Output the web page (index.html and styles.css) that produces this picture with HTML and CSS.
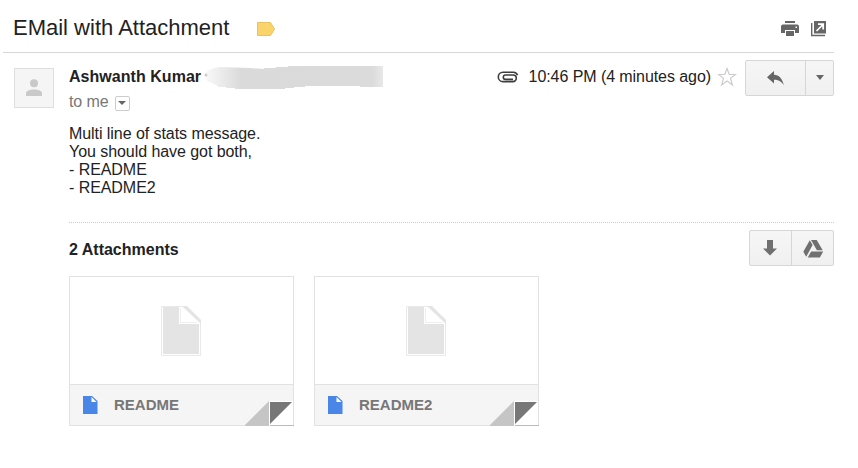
FILE: index.html
```html
<!DOCTYPE html>
<html lang="en">
<head>
<meta charset="utf-8">
<title>EMail with Attachment</title>
<link rel="stylesheet" href="styles.css">
</head>
<body>
<header class="subject">
  <h1>EMail with Attachment</h1>
  <svg class="tag" width="18" height="14" viewBox="0 0 18 14"><path d="M.5.5h13l4 6.500-4 6.500H.5z" fill="#fbd36b" stroke="#eac15c"/></svg>
  <div class="tools">
    <svg width="18" height="16" viewBox="0 0 18 16"><path fill="#666" d="M4 0h10v2H4zM2 3.500h14q2 0 2 2V12h-4V9H4v3H0V5.500q0-2 2-2zM5 10h8v5H5z"/><path fill="#fff" d="M14.500 5.500H16V7h-1.500z"/></svg>
    <svg width="16" height="16" viewBox="0 0 16 16"><path fill="#666" d="M3 0h12v12.500H3z"/><path d="M.7 2v12.500H14" fill="none" stroke="#666" stroke-width="1.400"/><path d="M5.500 10l6-6M7 3.200h5.200v5.200" fill="none" stroke="#fff" stroke-width="1.700"/></svg>
  </div>
</header>
<main class="message">
  <div class="avatar"><svg width="16" height="18" viewBox="0 0 16 18"><circle cx="8" cy="4.200" r="4" fill="#c9c9c9"/><path d="M0 17v-2.500C0 11.500 4 10.500 8 10.500s8 1 8 4V17z" fill="#c9c9c9"/></svg></div>
  <div class="content">
    <div class="head">
      <div class="from">
        <div class="sender"><b>Ashwanth Kumar</b>
          <svg class="smudge" width="182" height="26" viewBox="0 0 182 26">
            <defs><linearGradient id="fade"><stop offset="0" stop-color="#dedede" stop-opacity=".2"/><stop offset=".2" stop-color="#dadada"/><stop offset=".94" stop-color="#dbdbdb"/><stop offset="1" stop-color="#e8e8e8"/></linearGradient></defs>
            <path fill="url(#fade)" d="M1 8Q6 3 16 2l30 1 14 1V3h12V2h12V1h95v21h-23v-1h-55v1h-11v1H81v1H31v-1h-9v-1h-8v-1L3 16z"/>
            <circle cx="2" cy="10" r="1.500" fill="#d0cdc6"/>
          </svg>
        </div>
        <div class="to">to me <span class="details"><i class="caret small"></i></span></div>
      </div>
      <div class="meta">
        <svg class="clip" width="22" height="12" viewBox="0 0 22 12"><path d="M16 8.400H8.500a2.200 2.200 0 0 1 0-4.400H16a3.200 3.200 0 0 1 0 6.600H6A4.700 4.700 0 0 1 6 1.200h10.500a4.400 4.400 0 0 1 4 3" fill="none" stroke="#3e3e3e" stroke-width="1.600"/></svg>
        <span class="time">10:46 PM (4 minutes ago)</span>
        <svg class="star" width="20" height="20" viewBox="0 0 20 20"><path d="M10 1.500l2.300 6h6.200l-5 3.900 1.900 6.500-5.400-3.900-5.400 3.900 1.900-6.500-5-3.900h6.200z" fill="#fff" stroke="#ccc" stroke-width="1.200"/></svg>
        <div class="buttons reply">
          <span><svg width="18" height="15" viewBox="0 0 18 15"><path d="M0 6.300L7 0v3.800c5 .2 8.300 3.700 9.800 10.200C14.300 10.300 11.500 8.800 7 8.700v3.900z" fill="#666"/></svg></span>
          <span><i class="caret"></i></span>
        </div>
      </div>
    </div>
    <p class="body">Multi line of stats message.<br>You should have got both,<br>- README<br>- README2</p>
    <section class="attachments">
      <div class="bar">
        <h2>2 Attachments</h2>
        <div class="buttons save">
          <span><svg class="down" width="14" height="16" viewBox="0 0 14 16"><path d="M4 0h6v8.500h4L7 15.500l-7-7h4z" fill="#707070"/></svg></span>
          <span><svg class="drive" width="21" height="18" viewBox="0 0 21 18"><path fill="#707070" d="M6.800.2L9.600 5 3.200 16.800.3 11.800zM8 0h5.700l6 10.300h-5.800zM8.100 11.500h12.100l-3.300 6H4.800z"/></svg></span>
        </div>
      </div>
      <div class="cards">
        <article class="card">
          <div class="preview"><svg width="41" height="50" viewBox="0 0 41 50"><path d="M.5.500H25L39.500 14v35.500H.5z" fill="#fff" stroke="#e9e9e9"/><path d="M2 1h16v17h20v30H2zM23 0h3l14 14v4L22 1z" fill="#e4e4e4"/><path d="M19.500 2v14.500H36" fill="none" stroke="#eee"/></svg></div>
          <div class="caption"><svg width="15" height="18" viewBox="0 0 15 18"><path d="M0 0h9l5.500 5v13H0z" fill="#4986e7"/><path d="M8.500 1v5h5z" fill="#fff"/></svg><span>README</span></div>
          <svg class="fold" width="49" height="25" viewBox="0 0 49 25"><path d="M24 0v25H-1z" fill="#c5c5c5"/><path d="M24 0h25v25H24z" fill="#fff"/><path d="M25 1h22L25 23z" fill="#777"/><path d="M25 24.500h24" stroke="#bbb"/><path d="M48.500 0v24" stroke="#e2e2e2"/></svg>
        </article>
        <article class="card">
          <div class="preview"><svg width="41" height="50" viewBox="0 0 41 50"><path d="M.5.500H25L39.500 14v35.500H.5z" fill="#fff" stroke="#e9e9e9"/><path d="M2 1h16v17h20v30H2zM23 0h3l14 14v4L22 1z" fill="#e4e4e4"/><path d="M19.500 2v14.500H36" fill="none" stroke="#eee"/></svg></div>
          <div class="caption"><svg width="15" height="18" viewBox="0 0 15 18"><path d="M0 0h9l5.500 5v13H0z" fill="#4986e7"/><path d="M8.500 1v5h5z" fill="#fff"/></svg><span>README2</span></div>
          <svg class="fold" width="49" height="25" viewBox="0 0 49 25"><path d="M24 0v25H-1z" fill="#c5c5c5"/><path d="M24 0h25v25H24z" fill="#fff"/><path d="M25 1h22L25 23z" fill="#777"/><path d="M25 24.500h24" stroke="#bbb"/><path d="M48.500 0v24" stroke="#e2e2e2"/></svg>
        </article>
      </div>
    </section>
  </div>
</main>
</body>
</html>
```
FILE: styles.css
```css
* { box-sizing: border-box; }
body { margin: 0; background: #fff; color: #222; font: 16px/18px "Liberation Sans", Arial, sans-serif; }
svg { display: block; flex: none; }
h1, h2, p { margin: 0; }
.subject { display: flex; align-items: center; height: 53px; margin: 0 24px 0 3px; padding: 3px 7px 0 10px; border-bottom: 1px solid #d8d8d8; }
h1 { font-size: 22px; line-height: 26px; font-weight: 400; width: 217px; white-space: nowrap; }
.tag { margin: 3px 0 0 27px; }
.tools { display: flex; gap: 12px; margin: 3px 0 0 auto; }
.message { display: flex; padding: 7px 24px 0 14px; }
.avatar { display: flex; align-items: center; justify-content: center; width: 40px; height: 40px; margin-top: 8px; border: 1px solid #dedede; background: #f5f5f5; }
.content { flex: 1; margin-left: 15px; }
.head { display: flex; justify-content: space-between; height: 64px; }
.from { padding-top: 5px; }
.sender { display: flex; height: 26px; line-height: 24px; white-space: nowrap; letter-spacing: .04px; }
.smudge { margin-left: 3px; }
.to { display: flex; align-items: center; color: #777; height: 18px; margin-top: 2px; letter-spacing: -.1px; }
.details { display: flex; align-items: center; justify-content: center; width: 15px; height: 15px; margin: 2px 0 0 6px; border: 1px solid #ccc; border-radius: 2px; }
.caret { border: 4.5px solid transparent; border-top: 5px solid #666; border-bottom: 0; }
.caret.small { border-width: 4px 4px 0; }
.meta { display: flex; align-items: flex-start; }
.clip { margin: 11px 10px 0 0; }
.time { line-height: 24px; padding-top: 5px; letter-spacing: -.07px; white-space: nowrap; }
.star { margin: 7px 8px 0 6px; }
.buttons { display: flex; height: 36px; border: 1px solid #d6d6d6; border-radius: 2px; background: linear-gradient(#f6f6f6, #f0f0f0); }
.buttons span { display: flex; align-items: center; justify-content: center; flex: 1; }
.buttons span + span { border-left: 1px solid #d6d6d6; }
.reply { width: 89px; }
.reply span + span { flex: 0 0 28px; }
.reply .caret { margin-top: -2px; }
.save { width: 85px; }
.down { margin-right: 2px; }
.drive { margin: 2px 0 0 1px; }
.body { height: 98px; padding-top: 1px; letter-spacing: -.06px; }
.attachments { border-top: 1px dotted #ccc; }
.bar { display: flex; justify-content: space-between; padding-top: 7px; }
h2 { font-size: 16px; line-height: 38px; padding-top: 1px; }
.cards { display: flex; gap: 20px; margin-top: 7px; }
.card { position: relative; width: 225px; height: 150px; border: 1px solid #e2e2e2; }
.preview { display: flex; height: 107px; padding: 29px 0 0 91px; }
.caption { display: flex; align-items: center; gap: 16px; height: 41px; padding-left: 13px; border-top: 1px solid #e2e2e2; background: #f5f5f5; color: #777; font: bold 15px/18px "Liberation Sans", Arial, sans-serif; }
.fold { position: absolute; right: -1px; bottom: -1px; }
```
